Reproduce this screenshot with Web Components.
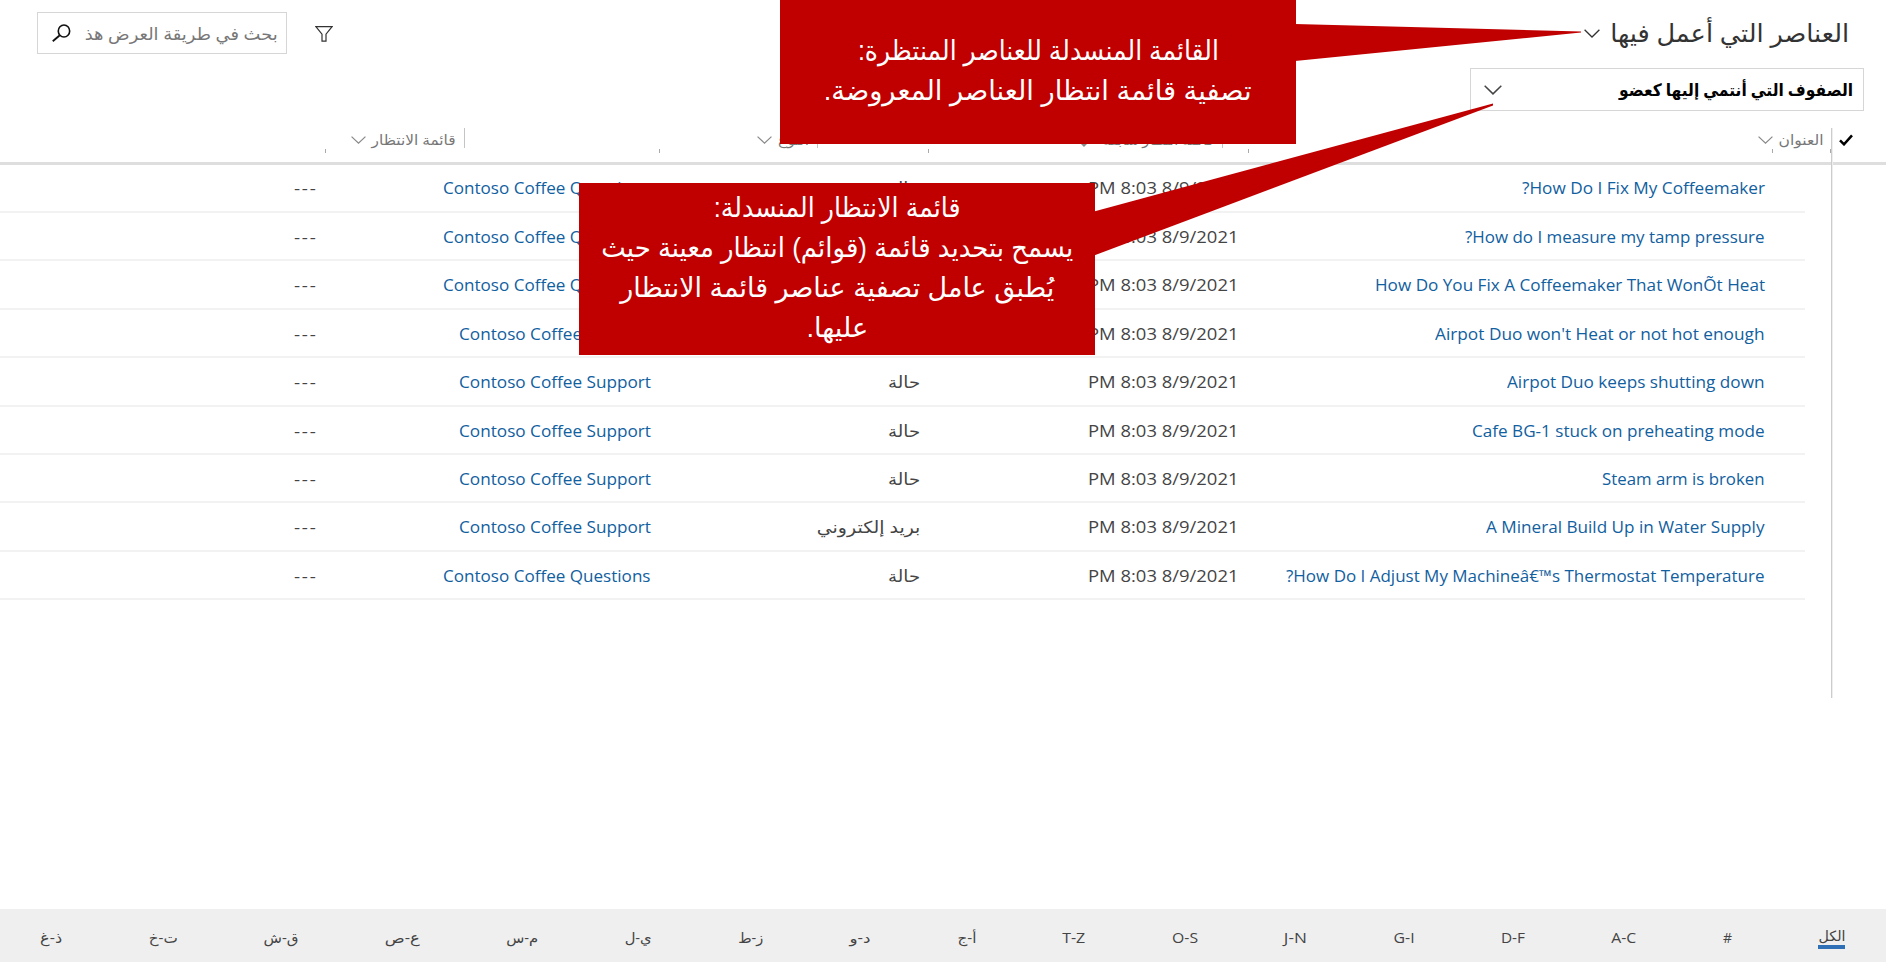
<!DOCTYPE html>
<html lang="ar" dir="rtl">
<head>
<meta charset="utf-8">
<title>العناصر التي أعمل فيها</title>
<style>
body{margin:0;background:#fff;font-family:"Open Sans","Noto Sans","DejaVu Sans",sans-serif}
</style>
</head>
<body>
<queue-page></queue-page>
<script>
/* Text run scaled horizontally to an exact measure */
class FitText extends HTMLElement{
  connectedCallback(){
    const r=this.shadowRoot||this.attachShadow({mode:'open'});
    const w=+this.getAttribute('w');
    r.innerHTML=`<style>:host{display:block;flex:none;width:${w}px;white-space:nowrap}
    span{display:inline-block;transform-origin:100% 50%}:host([dir=ltr]) span{transform-origin:0 50%}</style><span><slot></slot></span>`;
    const s=r.querySelector('span');
    const n=s.offsetWidth?s.getBoundingClientRect().width:0;
    if(n)s.style.transform=`scaleX(${w/n})`;
  }
}
customElements.define('fit-text',FitText);

const icons={
  chevron:['0 0 16 9','<path d="M.6.7 8 8 15.400.7" fill="none" stroke="currentColor" stroke-width="1.3"/>'],
  check:['0 0 14 12','<path d="M1 6.300 5 10.300 13 1.300" fill="none" stroke="currentColor" stroke-width="2.500"/>'],
  search:['0 0 20 18','<circle cx="12.600" cy="7" r="6" fill="none" stroke="currentColor" stroke-width="1.700"/><path d="M8.200 11.200.8 17.200" fill="none" stroke="currentColor" stroke-width="2"/>'],
  filter:['0 0 18 16','<path d="M.9.7h16.200L11 8.200v6.900H7V8.200z" fill="none" stroke="currentColor" stroke-width="1.200"/>'],
  down:['0 0 10 14','<path d="M5 0v13M1 9l4 4 4-4" fill="none" stroke="currentColor" stroke-width="1.400"/>']
};
class UiIcon extends HTMLElement{
  connectedCallback(){
    const r=this.attachShadow({mode:'open'}),[vb,p]=icons[this.getAttribute('name')];
    r.innerHTML=`<style>:host{display:block;flex:none}svg{display:block;width:100%;height:100%}</style><svg viewBox="${vb}" preserveAspectRatio="none">${p}</svg>`;
  }
}
customElements.define('ui-icon',UiIcon);

class PageToolbar extends HTMLElement{
  connectedCallback(){
    this.attachShadow({mode:'open'}).innerHTML=`<style>
    :host{display:flex;justify-content:space-between;height:126px;box-sizing:border-box;padding:12px 22px 0 37px}
    .title{display:flex;color:#333;font-size:25px;line-height:41px;padding-right:15px;height:56px}
    .title ui-icon{width:16px;height:9px;margin:17px 10px 0 0}
    .select{box-sizing:border-box;width:394px;height:43px;border:1px solid #d6d6d6;display:flex;justify-content:space-between;padding:0 10px 0 13px;color:#000;font-weight:700;font-size:17px;line-height:42px;padding:0 10px 0 13px}
    .select ui-icon{width:18px;height:10px;margin-top:16px;color:#444}
    .title fit-text{margin:0}
    .tools{display:flex;height:42px}
    .filter{width:18px;height:16px;margin:14px 0 0 28px;color:#333}
    .search{box-sizing:border-box;width:250px;height:42px;border:1px solid #d6d6d6;display:flex;justify-content:space-between;padding:0 8px 0 14px;color:#777;font-size:17px;line-height:42px}
    .search ui-icon{width:19px;height:18px;margin-top:11px;color:#111}
    </style>
    <div><div class="title"><fit-text w="239">العناصر التي أعمل فيها</fit-text><ui-icon name="chevron"></ui-icon></div>
    <div class="select"><fit-text w="234">الصفوف التي أنتمي إليها كعضو</fit-text><ui-icon name="chevron"></ui-icon></div></div>
    <div class="tools"><ui-icon class="filter" name="filter"></ui-icon><div class="search"><fit-text w="193">بحث في طريقة العرض هذ</fit-text><ui-icon name="search"></ui-icon></div></div>`;
  }
}
customElements.define('page-toolbar',PageToolbar);

const rows=[
 ['?How Do I Fix My Coffeemaker',243,0,1],['?How do I measure my tamp pressure',299.5,0,1],
 ['How Do You Fix A Coffeemaker That WonÕt Heat',390,0,1],["Airpot Duo won't Heat or not hot enough",329.500,0,0],
 ['Airpot Duo keeps shutting down',257.500,0,0],['Cafe BG-1 stuck on preheating mode',292.500,0,0],
 ['Steam arm is broken',162.500,0,0],['A Mineral Build Up in Water Supply',278.500,1,0],
 ['?How Do I Adjust My Machineâ€™s Thermostat Temperature',478.500,0,1]];

class GridRow extends HTMLElement{
  connectedCallback(){
    const [t,w,mail,q]=rows[+this.getAttribute('index')];
    this.attachShadow({mode:'open'}).innerHTML=`<style>
    :host{display:grid;grid-template-columns:526px 318.500px 269.500px 333px 1fr;height:48.430px;box-sizing:border-box;border-bottom:2px solid #f2f2f2;padding-right:40.500px;font-size:16.500px;line-height:48.500px;color:#444}
    .l{color:#1160a0}
    .d{letter-spacing:1.500px}
    </style>
    <div class="l"><fit-text dir="ltr" w="${w}">${t}</fit-text></div>
    <div><fit-text dir="ltr" w="150.500">PM 8:03 8/9/2021</fit-text></div>
    <div>${mail?'<fit-text w="103.500">بريد إلكتروني</fit-text>':'<fit-text w="32">حالة</fit-text>'}</div>
    <div class="l"><fit-text dir="ltr" w="${q?207.5:192}">Contoso Coffee ${q?'Questions':'Support'}</fit-text></div>
    <div><fit-text class="d" dir="ltr" w="23.500">---</fit-text></div>`;
  }
}
customElements.define('grid-row',GridRow);

class GridHeader extends HTMLElement{
  connectedCallback(){
    this.attachShadow({mode:'open'}).innerHTML=`<style>
    :host{display:grid;grid-template-columns:55px 608px 405px 353px 1fr;height:39px;box-sizing:border-box;border-bottom:3px solid #dedede;color:#777;font-size:14px;line-height:28px}
    .c{display:flex;position:relative}
    .c ui-icon{width:15px;height:8px;margin:10px 6px 0 0;color:#888}
    .sep::before{content:"";width:1px;height:20px;margin:2px 0 0 8px;background:#c4c4c4}
    .t{position:absolute;top:23px;width:1px;height:4px;background:#aaa}
    .ck{width:14px;height:12px;margin:8px 33px 0 0;color:#000}
    .c .so{width:10px;height:14px;margin-top:7px;margin-right:14px}
    </style>
    <div><ui-icon class="ck" name="check"></ui-icon></div>
    <div class="c" style="padding-right:7px"><fit-text w="45">العنوان</fit-text><ui-icon name="chevron"></ui-icon><i class="t" style="right:0"></i><i class="t" style="right:58px"></i><i class="t" style="right:582px"></i></div>
    <div class="c sep"><fit-text w="111">قائمة انتظار سابقة</fit-text><ui-icon class="so" name="down"></ui-icon><i class="t" style="right:294px"></i></div>
    <div class="c sep"><fit-text w="31">النوع</fit-text><ui-icon name="chevron"></ui-icon><i class="t" style="right:158px"></i></div>
    <div class="c sep"><fit-text w="84">قائمة الانتظار</fit-text><ui-icon name="chevron"></ui-icon><i class="t" style="right:139px"></i></div>`;
  }
}
customElements.define('grid-header',GridHeader);

class DataGrid extends HTMLElement{
  connectedCallback(){
    this.attachShadow({mode:'open'}).innerHTML=`<style>
    :host{display:flow-root;position:relative;height:783px}
    .b{padding-right:81px;margin-top:-.6px}
    .v{position:absolute;right:54px;top:2px;width:1px;height:570px;background:#ccc;box-shadow:1px 0 0 #eee}
    </style><grid-header></grid-header><div class="b">${rows.map((_,i)=>`<grid-row index="${i}"></grid-row>`).join('')}</div><div class="v"></div>`;
  }
}
customElements.define('data-grid',DataGrid);

class AlphaBar extends HTMLElement{
  connectedCallback(){
    const it=[['الكل',27],['#',9],['A-C',25],['D-F',24],['G-I',21],['J-N',23],['O-S',26],['T-Z',23],['أ-ج',19],['د-و',21],['ز-ط',25],['ي-ل',27],['م-س',32],['ع-ص',35],['ق-ش',35],['ت-خ',29],['ذ-غ',22]];
    this.attachShadow({mode:'open'}).innerHTML=`<style>
    :host{display:flex;justify-content:space-between;height:53px;box-sizing:border-box;padding:0 41px 0 40px;background:#efefef;color:#444;font-size:14px;line-height:57px}
    .on{line-height:53px;height:40px;box-sizing:border-box;border-bottom:4px solid #2f6fb5}
    </style>${it.map(([t,w],i)=>`<fit-text ${i?'':'class="on"'} w="${w}">${t}</fit-text>`).join('')}`;
  }
}
customElements.define('alpha-bar',AlphaBar);

/* Red annotation box; its pointer is drawn over the page */
class CallOut extends HTMLElement{
  connectedCallback(){
    this.attachShadow({mode:'open'}).innerHTML=`<style>
    :host{position:absolute;width:516px;background:#c00000;color:#fff;font-family:"Liberation Sans","DejaVu Sans",sans-serif;font-size:27px;line-height:40px;display:flex;flex-direction:column;align-items:center;justify-content:center;box-sizing:border-box}
    svg{position:absolute;left:516px;top:0;overflow:visible}
    </style><svg width="1" height="1"><polygon points="${this.getAttribute('pointer')}" fill="#c00000"/></svg><slot></slot>`;
  }
}
customElements.define('call-out',CallOut);

class QueuePage extends HTMLElement{
  connectedCallback(){
    this.attachShadow({mode:'open'}).innerHTML=`<style>
    :host{display:block;position:relative;width:1886px;height:962px;overflow:hidden;background:#fff}
    .a{left:780px;top:0;height:144px;padding-bottom:3px}
    .b{left:579px;top:183px;height:172px;padding-bottom:2px}
    </style><page-toolbar></page-toolbar><data-grid></data-grid><alpha-bar></alpha-bar>
    <call-out class="a" pointer="-1,24 285,31.500 285,32.500 -1,61"><fit-text w="361">القائمة المنسدلة للعناصر المنتظرة:</fit-text><fit-text w="428">تصفية قائمة انتظار العناصر المعروضة.</fit-text></call-out>
    <call-out class="b" pointer="-1,28.500 398,-79.500 398,-77.500 -1,72.500"><fit-text w="247">قائمة الانتظار المنسدلة:</fit-text><fit-text w="472">يسمح بتحديد قائمة (قوائم) انتظار معينة حيث</fit-text><fit-text w="434">يُطبق عامل تصفية عناصر قائمة الانتظار</fit-text><fit-text w="62">عليها.</fit-text></call-out>`;
  }
}
customElements.define('queue-page',QueuePage);
</script>
</body>
</html>
